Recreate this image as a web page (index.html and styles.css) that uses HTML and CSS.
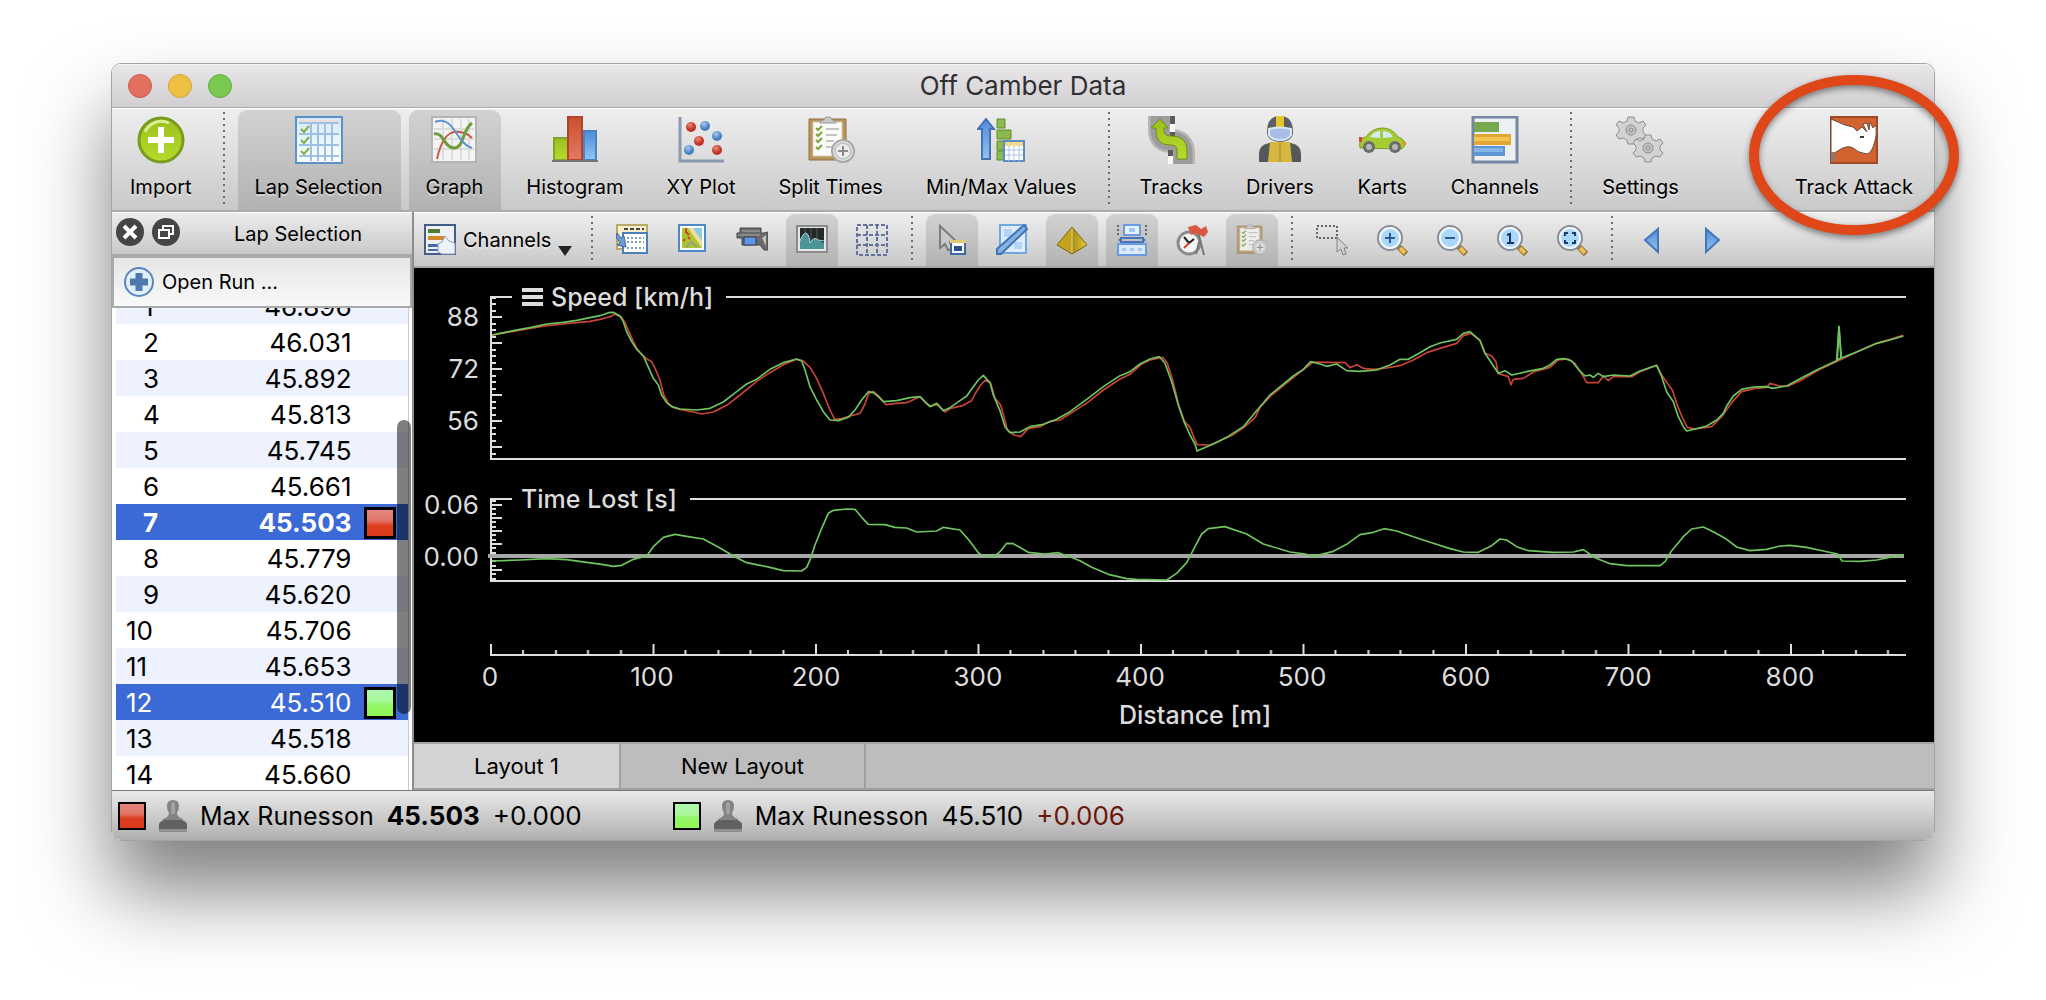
FILE: index.html
```html
<!DOCTYPE html>
<html lang="en">
<head>
<meta charset="utf-8">
<title>Off Camber Data</title>
<link rel="stylesheet" href="styles.css">
</head>
<body>
<svg class="defs" aria-hidden="true">
  <defs>
    <linearGradient id="lime" x2="0" y2="1"><stop offset="0" stop-color="#9cbf1c"/><stop offset="1" stop-color="#b6dc2c"/></linearGradient>
    <linearGradient id="red" x2="0" y2="1"><stop offset="0" stop-color="#c9512f"/><stop offset="1" stop-color="#e27a62"/></linearGradient>
    <linearGradient id="blue" x2="0" y2="1"><stop offset="0" stop-color="#4d8cd6"/><stop offset="1" stop-color="#93c4f2"/></linearGradient>
    <linearGradient id="sheet" x2="0" y2="1"><stop offset="0" stop-color="#d6e8f8"/><stop offset=".5" stop-color="#e6f6fd"/><stop offset="1" stop-color="#ffffff"/></linearGradient>
    <linearGradient id="gold" x2="1" y2="0"><stop offset="0" stop-color="#a88a14"/><stop offset="1" stop-color="#e6cc3c"/></linearGradient>
    <radialGradient id="redball" cx=".4" cy=".3"><stop offset="0" stop-color="#ee8a7c"/><stop offset="1" stop-color="#c03024"/></radialGradient>
    <radialGradient id="blueball" cx=".4" cy=".3"><stop offset="0" stop-color="#a9caee"/><stop offset="1" stop-color="#4a7fc0"/></radialGradient>
    <g id="clipboard">
      <path d="M2 3h37v41H2z" fill="#b8935c" stroke="#94703c"/>
      <path d="M6 6h29v34H6z" fill="#fbfbf9" stroke="#d8cdb8"/>
      <path d="M13 7c0-2 2-3 4-3 0-2 1-3 4-3s4 1 4 3c2 0 4 1 4 3z" fill="#c9c9c9" stroke="#949494"/>
      <path d="M9 12l2 2 4-4M9 18l2 2 4-4M9 24l2 2 4-4M9 31l2 2 4-4" fill="none" stroke="#7aa53c" stroke-width="2"/>
      <path d="M19 13h13M19 19h11M19 25h8M19 31h6" stroke="#c4c4c4" stroke-width="2"/>
      <circle cx="36" cy="35" r="11" fill="#ececec" stroke="#a8a8a8" stroke-width="2"/>
      <circle cx="36" cy="35" r="8" fill="none" stroke="#c4c4c4" stroke-width="2"/>
      <path d="M36 30v10M31 35h10" stroke="#8a8a8a" stroke-width="2"/>
    </g>
    <g id="lens">
      <path d="M23 23l7 7" stroke="#8a6a30" stroke-width="6"/>
      <path d="M24 24l5 5" stroke="#eec055" stroke-width="4"/>
      <circle cx="14" cy="14" r="12" fill="#8cc4f4" stroke="#888c94" stroke-width="2"/>
      <circle cx="14" cy="14" r="10" fill="#a9d8fb" stroke="#f4f8fc" stroke-width="2"/>
    </g>
    <g id="stamp">
      <path d="M8 6q0-6 6-6t6 6q0 4-2 7 0 4 6 6v4H4v-4q6-2 6-6-2-3-2-7z" fill="#828486"/>
      <path d="M12 5q0-3 2-3t2 3v9h-4z" fill="#a0a1a2"/>
      <path d="M0 24q2-4 7-4h14q5 0 7 4v5H0z" fill="#5f6163"/>
      <path d="M0 29h28v3H0z" fill="#8e8f90"/>
    </g>
    <path id="cog" d="M-3-13h6l1 4 4 2 4-2 3 4-3 3v4l3 3-3 4-4-1-4 2-1 4h-6l-1-4-4-2-4 1-3-4 3-3v-4l-3-3 3-4 4 2 4-2z" fill="#d2d2d2" stroke="#8e8e8e"/>
  </defs>
</svg>

<main class="window">
  <header class="titlebar">
    <div class="lights">
      <button class="light light-close" aria-label="Close"></button>
      <button class="light light-min" aria-label="Minimise"></button>
      <button class="light light-zoom" aria-label="Zoom"></button>
    </div>
    <h1>Off Camber Data</h1>
  </header>

  <nav class="toolbar" aria-label="Main">
    <button class="tool"><svg viewBox="0 0 48 48"><circle cx="24" cy="24" r="22" fill="url(#lime)" stroke="#7a9c1c" stroke-width="3"/><path d="M8 16a18 18 0 0 1 24-9" fill="none" stroke="#dcec90" stroke-width="3"/><path d="M24 11v26M11 24h26" stroke="#fff" stroke-width="6"/></svg><span>Import</span></button>
    <span class="sep"></span>
    <button class="tool on"><svg viewBox="0 0 48 48"><path d="M1 1h46v46H1z" fill="url(#sheet)" stroke="#5c92c8" stroke-width="2"/><path d="M4 4h40v4H4z" fill="#e8dcdc"/><path d="M4 7h40M4 18h40M4 29h40M4 40h40M16 7v38M23 7v38M30 7v38M37 7v38" stroke="#9fc0e2" stroke-width="2"/><path d="M6 13l3 3 5-6M6 24l3 3 5-6M6 35l3 3 5-6" fill="none" stroke="#7fae4a" stroke-width="2"/></svg><span>Lap Selection</span></button>
    <button class="tool on"><svg viewBox="0 0 48 48"><path d="M2 1h44v45H2z" fill="#f3f3f3" stroke="#b4b4b4" stroke-width="2"/><path d="M4 13h40M4 23h40M4 33h40M13 3v41M22 3v41M31 3v41M39 3v41" stroke="#dcdcdc" stroke-width="2"/><path d="M7 43C12 20 20 14 30 16q7 1 12 6" fill="none" stroke="#c4574a" stroke-width="2"/><path d="M4 18C14 16 14 32 24 32S32 14 42 7" fill="none" stroke="#6f9c3a" stroke-width="3"/><path d="M5 6C24-2 26 28 42 32" fill="none" stroke="#5d94cc" stroke-width="2"/></svg><span>Graph</span></button>
    <button class="tool"><svg viewBox="0 0 48 48"><path d="M3 22h14v22H3z" fill="url(#lime)" stroke="#86a12c" stroke-width="2"/><path d="M33 15h12v29H33z" fill="url(#blue)" stroke="#4a82c4" stroke-width="2"/><path d="M17 1h14v43H17z" fill="url(#red)" stroke="#b0442c" stroke-width="2"/><path d="M1 45h46" stroke="#747474" stroke-width="2"/></svg><span>Histogram</span></button>
    <button class="tool"><svg viewBox="0 0 48 48"><path d="M3 1v44h44" fill="none" stroke="#8a9ab2" stroke-width="3"/><g fill="url(#redball)"><circle cx="14" cy="11" r="5"/><circle cx="22" cy="25" r="5"/><circle cx="40" cy="34" r="5"/></g><g fill="url(#blueball)"><circle cx="28" cy="10" r="5"/><circle cx="40" cy="20" r="5"/><circle cx="12" cy="34" r="5"/></g></svg><span>XY Plot</span></button>
    <button class="tool"><svg viewBox="0 0 48 48"><use href="#clipboard"/></svg><span>Split Times</span></button>
    <button class="tool"><svg viewBox="0 0 48 48"><path d="M9 3l8 10h-4v30H5V13H1z" fill="url(#blue)" stroke="#4672b4" stroke-width="2"/><g fill="#8cba50" stroke="#5c8c2c"><path d="M20 3h8v9h-8zM20 14h14v9H20zM20 25h8v9h-8zM20 35h8v9h-8z"/></g><path d="M27 25h20v20H27z" fill="#fff" stroke="#5c8cc4" stroke-width="2"/><path d="M28 26h18v4H28z" fill="#f0d890"/><path d="M28 34h18M28 39h18M32 30v15M37 30v15M42 30v15" stroke="#a8c4e4"/></svg><span>Min/Max Values</span></button>
    <span class="sep"></span>
    <button class="tool"><svg viewBox="0 0 48 48"><path d="M13 0v14q0 11 11 11 12 0 12 12v11" fill="none" stroke="#b6b6b6" stroke-width="24"/><path d="M13 0v14q0 11 11 11 12 0 12 12v11" fill="none" stroke="#9c9c9c" stroke-width="19"/><path d="M23 0h5v8h-5zM23 16h5v7h-5zM21 34h5v6h-5z" fill="#5a5a5a"/><path d="M23 8h5v8h-5zM21 40h5v8h-5z" fill="#f8f8f8"/><path d="M13 3l8 9h-4v3q0 5 7 5 16 0 16 14v9H30v-9q0-5-7-5-14 0-14-14v-3H4z" fill="url(#lime)" stroke="#6e8f14" stroke-width="1"/></svg><span>Tracks</span></button>
    <button class="tool"><svg viewBox="0 0 48 48"><path d="M3 46V38q0-9 10-11h22q10 2 10 11v8z" fill="#55585c"/><path d="M14 26h20l2 20H12z" fill="#d6b840"/><path d="M24 27v19" stroke="#9e8a34" stroke-width="1"/><path d="M11 16q0-16 13-16t13 16q0 9-13 10-13-1-13-10z" fill="#5c5f63"/><path d="M20 0h8v13h-8z" fill="#e6c42c"/><path d="M13 13q11-3 22 0v6q-3 5-11 5t-11-5z" fill="#a8bee4" stroke="#dfe6f2" stroke-width="2"/></svg><span>Drivers</span></button>
    <button class="tool"><svg viewBox="0 0 48 48"><path d="M2 32q-2-10 6-11 6-9 17-9 9 0 15 9 7 2 7 8l-3 4z" fill="#a5cc34" stroke="#7a9c20" stroke-width="1"/><path d="M12 21q4-6 10-6v7zM25 15q7 0 10 6l-10 1z" fill="#d4ecfa"/><path d="M1 21h3v5H1z" fill="#d44a2c"/><path d="M44 26h4v3h-4z" fill="#e4962c"/><circle cx="11" cy="31" r="6" fill="#6c6c6c"/><circle cx="37" cy="31" r="6" fill="#6c6c6c"/><circle cx="11" cy="31" r="3" fill="#b8b8b8"/><circle cx="37" cy="31" r="3" fill="#b8b8b8"/></svg><span>Karts</span></button>
    <button class="tool"><svg viewBox="0 0 48 48"><path d="M2 1h44v45H2z" fill="#edf0f3" stroke="#7486a4" stroke-width="3"/><path d="M3 6h25v10H3z" fill="#76a850"/><path d="M3 18h37v11H3z" fill="#e2a634"/><path d="M3 21h35v4H3z" fill="#f3c550"/><path d="M3 30h31v10H3z" fill="#5c96d4"/><path d="M3 32h29v4H3z" fill="#84b6ea"/></svg><span>Channels</span></button>
    <span class="sep"></span>
    <button class="tool"><svg viewBox="0 0 48 48"><use href="#cog" x="15" y="14"/><use href="#cog" x="32" y="32"/><g fill="#c4c4c4" stroke="#8e8e8e"><circle cx="15" cy="14" r="5"/><circle cx="32" cy="32" r="5"/><circle cx="15" cy="14" r="2"/><circle cx="32" cy="32" r="2"/></g></svg><span>Settings</span></button>
    <button class="tool tool-last"><svg viewBox="0 0 48 48"><path d="M0 0h48v48H0z" fill="#d26230"/><path d="M1 1h46v46H1z" fill="none" stroke="#9c4a28" stroke-width="2"/><path d="M1 3l14 6 8 2 4 4 5-4 5 5-4-8 4-1 2 7 1-8 3 6 3-3q1 10-1 16-3 12-8 13-9-1-14-6-5-3-12 1L1 39z" fill="#fff" stroke="#6b4a3c" stroke-width="1"/><path d="M30 20h4v2h-4z" fill="#4a3630"/><path d="M1 36h3l2 7-5 4z" fill="#8a7a70"/></svg><span>Track Attack</span><svg class="callout" viewBox="0 0 220 170" aria-hidden="true"><ellipse cx="110" cy="85" rx="100" ry="75"/></svg></button>
  </nav>

  <div class="workspace">
    <aside class="dock">
      <div class="dock-head">
        <button class="round" aria-label="Close panel"><svg viewBox="0 0 28 28"><circle cx="14" cy="14" r="14" fill="#454545"/><path d="M8 8l12 12M20 8L8 20" stroke="#fff" stroke-width="4"/></svg></button>
        <button class="round" aria-label="Detach panel"><svg viewBox="0 0 28 28"><circle cx="14" cy="14" r="14" fill="#454545"/><path d="M11 12V8h10v8h-4M7 12h10v8H7z" fill="none" stroke="#fff" stroke-width="2"/></svg></button>
        <h2>Lap Selection</h2>
      </div>
      <button class="open-run"><svg viewBox="0 0 30 32"><circle cx="15" cy="16" r="14" fill="#dff0fc" stroke="#5b86bd" stroke-width="2"/><path d="M15 7v18M6 16h18" stroke="#4f78b0" stroke-width="7"/></svg>Open Run ...</button>
      <div class="laps">
        <table>
          <tbody>
            <tr><th scope="row" class="short">1</th><td>46.896</td><td class="mark"></td></tr>
            <tr><th scope="row" class="short">2</th><td>46.031</td><td class="mark"></td></tr>
            <tr><th scope="row" class="short">3</th><td>45.892</td><td class="mark"></td></tr>
            <tr><th scope="row" class="short">4</th><td>45.813</td><td class="mark"></td></tr>
            <tr><th scope="row" class="short">5</th><td>45.745</td><td class="mark"></td></tr>
            <tr><th scope="row" class="short">6</th><td>45.661</td><td class="mark"></td></tr>
            <tr class="picked best"><th scope="row" class="short">7</th><td>45.503</td><td class="mark"><span class="swatch swatch-red"></span></td></tr>
            <tr><th scope="row" class="short">8</th><td>45.779</td><td class="mark"></td></tr>
            <tr><th scope="row" class="short">9</th><td>45.620</td><td class="mark"></td></tr>
            <tr><th scope="row">10</th><td>45.706</td><td class="mark"></td></tr>
            <tr><th scope="row">11</th><td>45.653</td><td class="mark"></td></tr>
            <tr class="picked"><th scope="row">12</th><td>45.510</td><td class="mark"><span class="swatch swatch-green"></span></td></tr>
            <tr><th scope="row">13</th><td>45.518</td><td class="mark"></td></tr>
            <tr><th scope="row">14</th><td>45.660</td><td class="mark"></td></tr>
          </tbody>
        </table>
        <span class="thumb"></span>
      </div>
    </aside>

    <section class="view">
      <div class="subbar">
        <button class="menu"><svg viewBox="0 0 32 32"><path d="M1 1h30v29H1z" fill="#eef0f2" stroke="#465c88" stroke-width="2"/><path d="M4 5h12v4H4z" fill="#4e7c34"/><path d="M4 12h16v4H4z" fill="#d08a2c"/><path d="M4 20h12v3H4zM4 25h10v2H4z" fill="#3f6cac"/><path d="M14 28v-8l4-2 3-6 4 5 6 2v11H18z" fill="#eef2fa" stroke="#8c9cbc"/></svg>Channels<i class="caret"></i></button>
        <span class="sep"></span>
        <button class="mini" aria-label="Time table"><svg viewBox="0 0 32 32"><path d="M1 1h30v24H1z" fill="#f8f0cc" stroke="#bca868" stroke-width="2"/><path d="M8 5h20" stroke="#444" stroke-width="2" stroke-dasharray="4 2"/><path d="M7 9h24v20H7z" fill="#fff" stroke="#4a80bc" stroke-width="2"/><path d="M11 14h17M11 18h17M11 24h17" stroke="#7c9cc8" stroke-width="2" stroke-dasharray="2 2"/><path d="M1 9l4 5 3-2 2 11-9-2 3-2-4-6z" fill="#6c9cd8" stroke="#3c64a4"/></svg></button>
        <button class="mini" aria-label="Map"><svg viewBox="0 0 32 32"><path d="M3 1h26v26H3z" fill="#fff" stroke="#4f88c8" stroke-width="2"/><path d="M6 4h20v20H6z" fill="#aac62c"/><path d="M15 4h11v15z" fill="#8cc8f0"/><path d="M12 4h5l9 13v7z" fill="#f0dc9c"/><path d="M10 4v4l3 3M7 17l2-2M12 13l2 2" stroke="#d43c2c" stroke-width="2" fill="none"/><path d="M10 23l5-5 6 5" stroke="#9a9a88" stroke-width="2" fill="none"/></svg></button>
        <button class="mini" aria-label="Video"><svg viewBox="0 0 32 32"><path d="M4 4h21v5h3l4-1v18h-4l-4-5H6v-7H1V9h3z" fill="#6a6a6a" stroke="#484848"/><path d="M6 7h18M2 11h22" stroke="#a8a8a8" stroke-width="1"/><path d="M8 13h12v8H8z" fill="#5a96ec" stroke="#3c3c3c"/><path d="M26 14l4-3v11z" fill="#c4c4c4"/></svg></button>
        <button class="mini on" aria-label="Signal"><svg viewBox="0 0 32 32"><path d="M1 2h30v26H1z" fill="#e8e8e8" stroke="#8a8a8a" stroke-width="2"/><path d="M4 4h24v21H4z" fill="#242828"/><path d="M9 4v20M15 4v20M21 4v20" stroke="#50585a"/><path d="M4 25V17q3-8 6-8 3 1 4 10 4-7 8-3l6 3v6z" fill="#4c9496"/><path d="M4 17q3-8 6-8 3 1 4 10 4-7 8-3l6 1" fill="none" stroke="#a4d8d6"/></svg></button>
        <button class="mini" aria-label="Grid"><svg viewBox="0 0 32 32"><path d="M1 1h30v30H1zM11 1v30M21 1v30M1 11h30M1 21h30" fill="none" stroke="#62749c" stroke-width="2" stroke-dasharray="4 2"/></svg></button>
        <span class="sep"></span>
        <button class="mini on" aria-label="Pointer"><svg viewBox="0 0 32 32"><path d="M4 2v22l5-4 3 6 4-1-2-7h7z" fill="#c8c8c8" stroke="#7c7c7c" stroke-width="2"/><path d="M15 18h14v12H15z" fill="#fff" stroke="#3c68ac" stroke-width="2"/><path d="M14 16h16v3H14z" fill="#e0c878"/><path d="M18 22h8v5h-8z" fill="#2c5090"/></svg></button>
        <button class="mini" aria-label="Measure"><svg viewBox="0 0 32 32"><path d="M4 1h26v28H4z" fill="#dcecfc" stroke="#74a6e2" stroke-width="2"/><path d="M8 5h8v8H8zM18 18h8v7h-8z" fill="#b2d4fa"/><path d="M28 1l3 4L5 30H1v-5z" fill="#84b2e8" stroke="#4472b0" stroke-width="2"/></svg></button>
        <button class="mini on" aria-label="Marker"><svg viewBox="0 0 32 32"><path d="M16 3L1 21l15 9z" fill="#c4a41c"/><path d="M16 3l15 18-15 9z" fill="url(#gold)"/><path d="M16 3L1 21l15 9 15-9zM16 3v27" fill="none" stroke="#7c6410"/><path d="M16 4v25" stroke="#fff0a0"/></svg></button>
        <button class="mini on" aria-label="Stretch"><svg viewBox="0 0 32 32"><path d="M2 1v12M30 1v12" stroke="#666" stroke-width="2" stroke-dasharray="2 2"/><path d="M8 1h16v10H8z" fill="#e8f2fe" stroke="#6c9ce0" stroke-width="2"/><path d="M13 4h6v4h-6z" fill="#a4c8fa"/><path d="M4 14h24M4 18h24" stroke="#4c74b8" stroke-width="2"/><path d="M2 16l4-3v6zM30 16l-4-3v6z" fill="#4c74b8"/><path d="M2 20h28v11H2z" fill="#dceafe" stroke="#6c9ce0" stroke-width="2"/><path d="M6 24h4v3H6zM14 24h4v3h-4zM22 24h4v3h-4z" fill="#a4c8fa"/></svg></button>
        <button class="mini" aria-label="Stopwatch"><svg viewBox="0 0 32 32"><circle cx="13" cy="19" r="11" fill="#f4f4f4" stroke="#8c8c8c" stroke-width="3"/><path d="M8 13l5 6 5-4" stroke="#222" stroke-width="2" fill="none"/><path d="M13 19l-5 5" stroke="#e04424" stroke-width="2"/><path d="M22 8l6 23M20 30l3-12" stroke="#787878" stroke-width="2"/><path d="M12 3l8-2 5 4 5-3 2 6-4 5-9-4-4 2z" fill="#d85840"/></svg></button>
        <button class="mini on" aria-label="Splits"><svg viewBox="0 0 48 48" opacity=".75"><use href="#clipboard"/></svg></button>
        <span class="sep"></span>
        <button class="mini" aria-label="Select area"><svg viewBox="0 0 32 32"><path d="M1 2h20v12H1z" fill="none" stroke="#666" stroke-width="2" stroke-dasharray="2 2"/><path d="M21 13v15l4-3 2 6 3-1-2-6h4z" fill="#d0d0d0" stroke="#848484"/></svg></button>
        <button class="mini" aria-label="Zoom in"><svg viewBox="0 0 32 32"><use href="#lens"/><path d="M14 9v10M9 14h10" stroke="#34588e" stroke-width="2"/></svg></button>
        <button class="mini" aria-label="Zoom out"><svg viewBox="0 0 32 32"><use href="#lens"/><path d="M9 14h10" stroke="#34588e" stroke-width="2"/></svg></button>
        <button class="mini" aria-label="Zoom to actual size"><svg viewBox="0 0 32 32"><use href="#lens"/><path d="M11 11l3-1v9M11 19h7" stroke="#1c3458" stroke-width="2" fill="none"/></svg></button>
        <button class="mini" aria-label="Zoom to fit"><svg viewBox="0 0 32 32"><use href="#lens"/><path d="M9 12V9h3M16 9h3v3M19 16v3h-3M12 19H9v-3" stroke="#1c3c6c" stroke-width="2" fill="none"/></svg></button>
        <span class="sep"></span>
        <button class="mini" aria-label="Previous"><svg viewBox="0 0 32 32"><path d="M22 5v23L9 16z" fill="url(#blue)" stroke="#4476b8" stroke-width="2"/></svg></button>
        <button class="mini" aria-label="Next"><svg viewBox="0 0 32 32"><path d="M10 5v23l13-12z" fill="url(#blue)" stroke="#4476b8" stroke-width="2"/></svg></button>
      </div>

      <svg class="chart" viewBox="414 268 1520 474" role="img" aria-label="Speed and time lost against distance">
        <defs>
          <pattern id="speedTicks" x="492" y="316" width="12" height="26" patternUnits="userSpaceOnUse"><path d="M0 0h10v2H0zM0 7h4v2H0zM0 13h4v2H0zM0 20h4v2H0z" fill="#dedede"/></pattern>
          <pattern id="lostTicks" x="492" y="504" width="12" height="13" patternUnits="userSpaceOnUse"><path d="M0 0h10v2H0zM0 4h4v2H0zM0 9h4v2H0z" fill="#dedede"/></pattern>
          <pattern id="xTicks" x="490" y="644" width="162.5" height="12" patternUnits="userSpaceOnUse"><path d="M0 0h2v12H0zM32 6h2v6h-2zM65 6h2v6h-2zM97 6h2v6h-2zM130 6h2v6h-2z" fill="#dedede"/></pattern>
        </defs>
        <rect x="492" y="298" width="12" height="160" fill="url(#speedTicks)"/>
        <rect x="492" y="500" width="12" height="80" fill="url(#lostTicks)"/>
        <rect x="490" y="644" width="1416" height="12" fill="url(#xTicks)"/>
        <g class="axis">
          <path d="M512 297H491V459H1906M726 297H1906"/>
          <path d="M512 499H491V581H1906M690 499H1906"/>
          <path d="M490 655H1906"/>
        </g>
        <path class="zero" d="M488 556H1904"/>
        <g class="trace" transform="translate(480 280) scale(.33333)">
          <polyline class="red" points="36,166 60,161 100,154 150,145 200,137 250,132 290,128 330,124 360,118 390,110 405,103 425,112 436,130 447,155 460,185 472,208 490,228 502,238 515,245 525,265 540,300 550,342 565,370 580,382 600,388 640,396 665,402 700,396 740,376 780,345 830,304 870,278 910,254 950,238 968,242 990,262 1010,295 1030,340 1050,390 1064,418 1085,416 1110,408 1140,400 1155,372 1165,342 1180,334 1198,350 1218,374 1250,370 1280,368 1320,350 1340,372 1352,378 1372,374 1395,396 1412,385 1450,376 1475,362 1485,342 1500,318 1516,300 1532,310 1545,355 1562,375 1572,410 1582,450 1602,465 1622,470 1645,446 1680,440 1710,424 1740,420 1772,400 1822,368 1870,330 1920,297 1950,283 1985,252 2010,240 2048,232 2062,250 2078,300 2096,375 2114,425 2130,442 2142,472 2152,494 2190,495 2220,482 2260,464 2295,440 2326,412 2340,382 2375,345 2445,288 2475,265 2500,246 2540,247 2595,248 2610,263 2630,254 2650,265 2680,268 2720,264 2760,257 2800,240 2840,218 2880,205 2930,190 2950,167 2972,160 3000,180 3015,220 3035,228 3048,245 3054,280 3085,290 3093,314 3100,298 3130,295 3160,276 3210,262 3235,240 3265,237 3285,250 3310,290 3320,308 3355,308 3370,288 3385,302 3400,290 3455,290 3480,275 3530,256 3545,285 3562,310 3577,330 3590,370 3605,408 3622,442 3645,447 3695,440 3725,410 3755,368 3785,335 3825,325 3860,322 3870,310 3900,318 3925,318 3960,302 4020,268 4085,238 4130,216 4190,190 4230,178 4270,166"/>
          <polyline class="green" points="36,165 60,160 100,152 150,143 200,132 250,127 290,121 330,113 360,107 385,98 400,97 420,108 430,125 440,155 455,185 470,208 490,228 500,250 520,295 535,315 545,345 560,368 575,380 600,387 650,390 690,385 730,366 770,335 800,312 830,298 870,268 910,248 950,237 965,243 975,270 990,320 1010,360 1030,395 1050,420 1075,422 1105,412 1125,390 1145,360 1165,335 1180,338 1195,350 1210,365 1250,362 1290,353 1320,350 1335,365 1350,380 1370,370 1390,392 1410,383 1440,362 1460,348 1480,320 1495,300 1510,286 1530,308 1540,345 1560,392 1575,440 1590,458 1620,456 1650,440 1690,433 1730,418 1770,395 1820,358 1870,320 1920,287 1950,275 1980,252 2010,237 2038,230 2055,250 2075,305 2095,375 2112,425 2130,465 2145,492 2151,513 2170,505 2205,490 2240,472 2290,440 2325,398 2370,345 2440,288 2470,268 2492,245 2520,252 2540,259 2570,252 2600,272 2640,274 2690,270 2730,255 2760,238 2785,238 2820,218 2850,200 2880,189 2930,178 2950,160 2970,155 3000,182 3015,220 3035,250 3055,280 3075,272 3095,285 3140,275 3190,265 3210,255 3230,238 3255,236 3275,243 3295,268 3315,288 3330,285 3340,292 3355,280 3370,290 3400,285 3450,288 3480,273 3530,256 3545,290 3560,335 3580,365 3595,410 3610,440 3620,453 3645,447 3680,438 3710,420 3730,400 3740,378 3760,348 3785,328 3820,321 3860,320 3878,325 3920,318 3960,296 4010,270 4070,242 4077,140 4084,234 4130,216 4190,190 4230,180 4270,168"/>
          <path class="green" d="M4072 240l5-100 6 94z"/>
          <polyline class="green" points="36,843 120,840 200,836 260,839 320,847 370,854 400,859 425,856 460,838 500,828 520,800 550,772 585,763 620,769 670,777 720,804 760,828 800,848 860,860 910,872 965,873 980,862 992,835 1005,795 1025,745 1045,700 1060,691 1100,687 1125,688 1145,712 1165,733 1215,734 1245,742 1280,744 1310,756 1370,753 1390,742 1440,750 1465,778 1495,818 1512,830 1545,828 1560,815 1580,790 1600,791 1645,817 1695,822 1735,818 1765,829 1800,842 1835,862 1885,883 1940,896 1970,898 2060,900 2090,880 2120,848 2145,800 2165,762 2185,746 2235,740 2300,762 2350,792 2430,816 2475,822 2500,829 2560,814 2600,793 2640,764 2680,757 2712,746 2750,753 2800,770 2860,790 2910,806 2950,816 2995,817 3035,797 3060,777 3080,780 3110,800 3145,812 3220,817 3280,816 3310,809 3345,833 3390,851 3440,857 3540,857 3555,845 3575,812 3610,770 3635,747 3670,741 3700,755 3740,778 3770,801 3810,812 3860,808 3900,798 3930,796 3980,802 4030,813 4073,822 4086,843 4140,844 4190,840 4240,830 4270,826"/>
        </g>
        <g class="scale end"><text x="479" y="326">88</text><text x="479" y="378">72</text><text x="479" y="430">56</text><text x="479" y="514">0.06</text><text x="479" y="566">0.00</text></g>
        <g class="scale mid"><text x="490" y="686">0</text><text x="652" y="686">100</text><text x="816" y="686">200</text><text x="978" y="686">300</text><text x="1140" y="686">400</text><text x="1302" y="686">500</text><text x="1466" y="686">600</text><text x="1628" y="686">700</text><text x="1790" y="686">800</text></g>
        <path class="grip" d="M522 290h21M522 297h21M522 304h21"/>
        <g class="caption"><text x="551" y="306">Speed [km/h]</text><text x="521" y="508">Time Lost [s]</text><text x="1119" y="724">Distance [m]</text></g>
      </svg>

      <div class="tabs" role="tablist">
        <button role="tab" aria-selected="true" class="tab tab-on">Layout 1</button>
        <button role="tab" aria-selected="false" class="tab">New Layout</button>
      </div>
    </section>
  </div>

  <footer class="status">
    <div class="entry"><span class="swatch swatch-red"></span><svg viewBox="0 0 28 32"><use href="#stamp"/></svg><span>Max Runesson</span><b class="time">45.503</b><span class="time">+0.000</span></div>
    <div class="entry"><span class="swatch swatch-green"></span><svg viewBox="0 0 28 32"><use href="#stamp"/></svg><span>Max Runesson</span><span class="time">45.510</span><span class="time late">+0.006</span></div>
  </footer>
</main>
</body>
</html>
```
FILE: styles.css
```css
* { box-sizing: border-box; }

body {
  min-height: 100vh;
  margin: 0;
  padding: 63px 111px 150px;
  background: #fff;
  color: #000;
  font: 20px/24px Inter, "Liberation Sans", sans-serif;
}

button {
  margin: 0;
  padding: 0;
  border: 0;
  background: none;
  color: inherit;
  font: inherit;
}

h1, h2 { margin: 0; font-weight: 400; }
svg { display: block; flex: none; }
.defs { position: absolute; width: 0; height: 0; }

.window {
  border: 1px solid #a4a4a4;
  border-radius: 10px;
  box-shadow: 0 50px 80px rgba(0, 0, 0, .5);
}

/* Title bar */
.titlebar {
  display: grid;
  grid-template-columns: 1fr auto 1fr;
  align-items: center;
  height: 44px;
  padding: 0 16px;
  border-top: 1px solid #f4f4f4;
  border-bottom: 1px solid #acaaac;
  border-radius: 9px 9px 0 0;
  background: linear-gradient(#e8e6e8, #d1cfd1);
}
.titlebar h1 { font-size: 26px; color: #303030; }
.lights { display: flex; gap: 16px; }
.light { width: 24px; height: 24px; border: 1px solid; border-radius: 50%; }
.light-close { background: #e1705f; border-color: #cf5a4a; }
.light-min { background: #efc143; border-color: #d6a438; }
.light-zoom { background: #79c950; border-color: #5fae38; }

/* Main toolbar */
.toolbar {
  display: flex;
  gap: 8px;
  height: 104px;
  padding: 1px 3px 0 1px;
  border-top: 1px solid #fff;
  border-bottom: 2px solid #ababab;
  background: linear-gradient(#eee, #c9c9c9);
}
.tool {
  position: relative;
  display: flex;
  flex-direction: column;
  align-items: center;
  gap: 11px;
  min-width: 86px;
  padding: 6px 18px 0 17px;
  border-radius: 9px 9px 0 0;
  white-space: nowrap;
  text-shadow: 0 2px 0 rgba(255, 255, 255, .4);
}
.tool svg { width: 48px; height: 48px; }
.tool-last { margin-left: auto; }
.on { background: linear-gradient(#d2d2d2, #b2b2b2); }
.sep {
  flex: none;
  width: 12px;
  margin: 2px 0 6px;
  background: repeating-linear-gradient(#6c6c6c 0 2px, transparent 2px 6px) 5px 0 / 2px 100% no-repeat;
}
.tool .callout {
  position: absolute;
  z-index: 2;
  top: 50%;
  left: 50%;
  width: 220px;
  height: 170px;
  margin: -90px 0 0 -110px;
  pointer-events: none;
  filter: drop-shadow(0 3px 3px rgba(0, 0, 0, .45));
}
.callout ellipse { fill: none; stroke: #df4719; stroke-width: 10; }

/* Lap list */
.workspace { display: grid; grid-template-columns: 302px minmax(0, 1fr); }
.dock {
  display: flex;
  flex-direction: column;
  min-height: 0;
  border-right: 2px solid #8c8c8c;
  background: #fff;
}
.dock-head {
  display: flex;
  align-items: center;
  gap: 8px;
  height: 44px;
  padding: 0 4px;
  border-top: 1px solid #fff;
  border-bottom: 2px solid #a8a8a8;
  background: linear-gradient(#ececec, #c9c9c9);
}
.dock-head h2 { flex: 1; font-size: 20px; text-align: center; }
.round, .round svg { width: 28px; height: 28px; }
.round { margin-bottom: 4px; }
.open-run {
  display: flex;
  align-items: center;
  gap: 8px;
  height: 52px;
  padding-left: 10px;
  border: 2px solid #aaa;
  background: linear-gradient(#e6e6e6, #f9f9f9);
}
.open-run svg { width: 30px; height: 32px; }
.laps {
  position: relative;
  flex: 1 1 0;
  min-height: 0;
  padding: 0 3px 0 4px;
  overflow: hidden;
}
.laps table {
  width: 100%;
  margin-top: -20px;
  border-right: 1px solid #ccc;
  border-collapse: collapse;
  font-size: 26px;
}
.laps tr { height: 36px; background: #fff; }
.laps tr:nth-child(odd) { background: #edf2fe; }
.laps tr.picked { background: #3b69d6; color: #fff; }
.laps th, .laps td { padding: 1px 0 0; font-weight: 400; text-align: right; }
.laps th { width: 60px; padding-left: 10px; text-align: left; }
.laps .short { padding-left: 27px; }
.laps .best th, .laps .best td { font-weight: 700; }
.laps .mark { width: 57px; padding-left: 12px; }
.swatch {
  display: block;
  flex: none;
  width: 32px;
  height: 32px;
  border: 3px solid #000;
}
.swatch-red { background: linear-gradient(#e5877f, #e07468 40%, #dc3f20 60%, #d93a18); }
.swatch-green { background: linear-gradient(#aef8ae, #a8f79c 40%, #92f764 60%, #8ef752); }
.thumb {
  position: absolute;
  top: 112px;
  right: 1px;
  width: 14px;
  height: 294px;
  border-radius: 7px;
  background: rgba(0, 0, 0, .5);
}

/* Graph view */
.subbar {
  display: flex;
  gap: 8px;
  height: 56px;
  padding: 1px 4px 0;
  border-top: 1px solid #fff;
  border-bottom: 2px solid #a4a4a4;
  background: linear-gradient(#eee, #c8c8c8);
}
.menu {
  display: flex;
  align-items: center;
  gap: 7px;
  width: 160px;
  padding-left: 6px;
  text-shadow: 0 2px 0 rgba(255, 255, 255, .4);
}
.caret {
  align-self: flex-end;
  margin-bottom: 10px;
  border: 7px solid transparent;
  border-top: 10px solid #222;
  border-bottom: 0;
}
.mini {
  display: grid;
  place-items: center;
  width: 52px;
  border-radius: 9px 9px 0 0;
}
.mini svg, .menu svg { width: 32px; height: 32px; }

.chart { width: 100%; height: auto; background: #000; }
.axis { fill: none; stroke: #dedede; stroke-width: 2; }
.zero { stroke: #a8a8a8; stroke-width: 4; }
.trace { fill: none; stroke-width: 5; stroke-linejoin: round; }
.trace .red { stroke: #c84436; }
.trace .green { stroke: #6fc45f; }
.scale, .caption { fill: #dcdcdc; font-size: 26px; }
.caption { font-size: 25px; font-weight: 500; }
.end { text-anchor: end; }
.mid { text-anchor: middle; }
.grip { stroke: #dcdcdc; stroke-width: 4; }

.tabs {
  display: flex;
  height: 48px;
  border-top: 2px solid #a4a4a4;
  border-bottom: 2px solid #a0a0a0;
  background: #bdbdbd;
  font-size: 22px;
}
.tab { padding: 0 60px; border-right: 2px solid #a0a0a0; }
.tab-on { background: #d3d3d3; }

/* Status bar */
.status {
  display: flex;
  gap: 91px;
  height: 50px;
  padding: 0 6px;
  border-top: 1px solid #777;
  border-radius: 0 0 9px 9px;
  background: linear-gradient(#e9e9e9, #b0b0b0);
  font-size: 25px;
}
.entry { display: flex; align-items: center; gap: 13px; }
.entry svg { width: 28px; height: 32px; }
.entry .swatch { width: 28px; height: 28px; border-width: 2px; }
.time { font-size: 26px; }
.late { color: #6b160b; }
```
